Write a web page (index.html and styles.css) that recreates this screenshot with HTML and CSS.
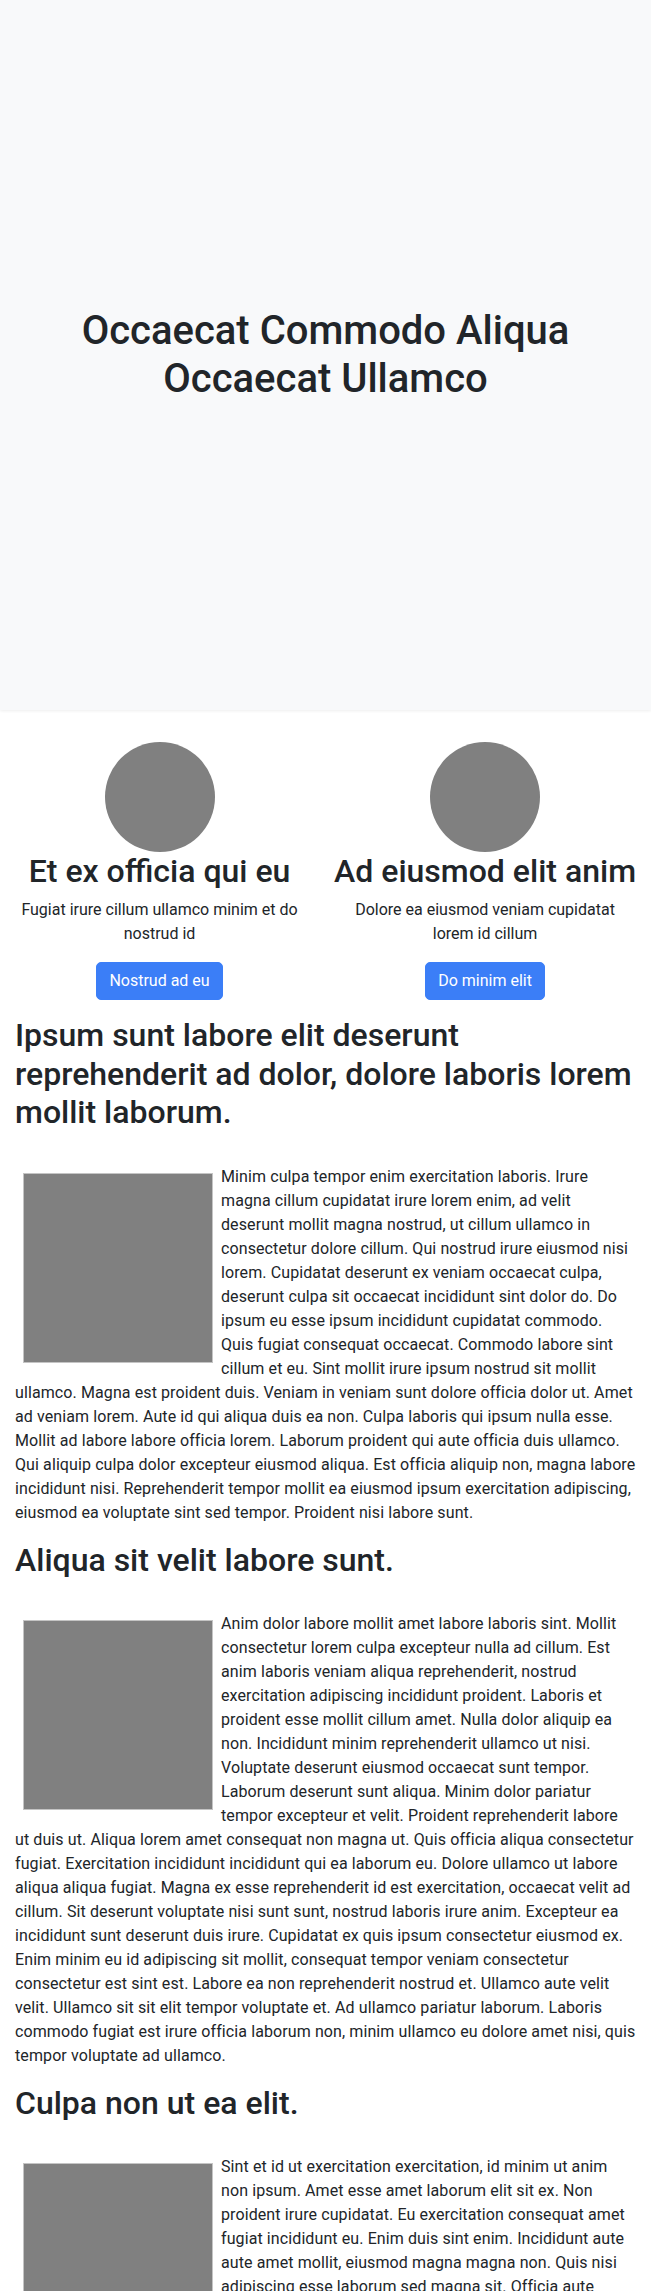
FILE: index.html
```html
<!DOCTYPE html>
<html lang="en">
<head>
<meta charset="utf-8">
<title>Occaecat Commodo Aliqua Occaecat Ullamco</title>
<link rel="stylesheet" href="styles.css">
</head>
<body>
<header class="hero">
  <h1 class="hero-title">Occaecat Commodo Aliqua<br>Occaecat Ullamco</h1>
</header>
<main class="container">
  <section class="features">
    <div class="feature">
      <div class="avatar"></div>
      <h2 class="feature-title">Et ex officia qui eu</h2>
      <p class="feature-text">Fugiat irure cillum ullamco minim et do nostrud id</p>
      <a class="btn" href="#">Nostrud ad eu</a>
    </div>
    <div class="feature">
      <div class="avatar"></div>
      <h2 class="feature-title">Ad eiusmod elit anim</h2>
      <p class="feature-text">Dolore ea eiusmod veniam cupidatat lorem id cillum</p>
      <a class="btn" href="#">Do minim elit</a>
    </div>
  </section>

  <article class="article">
    <h2 class="article-title">Ipsum sunt labore elit deserunt reprehenderit ad dolor, dolore laboris lorem mollit laborum.</h2>
    <p class="article-text"><span class="thumb"></span>Minim culpa tempor enim exercitation laboris. Irure magna cillum cupidatat irure lorem enim, ad velit deserunt mollit magna nostrud, ut cillum ullamco in consectetur dolore cillum. Qui nostrud irure eiusmod nisi lorem. Cupidatat deserunt ex veniam occaecat culpa, deserunt culpa sit occaecat incididunt sint dolor do. Do ipsum eu esse ipsum incididunt cupidatat commodo. Quis fugiat consequat occaecat. Commodo labore sint cillum et eu. Sint mollit irure ipsum nostrud sit mollit ullamco. Magna est proident duis. Veniam in veniam sunt dolore officia dolor ut. Amet ad veniam lorem. Aute id qui aliqua duis ea non. Culpa laboris qui ipsum nulla esse. Mollit ad labore labore officia lorem. Laborum proident qui aute officia duis ullamco. Qui aliquip culpa dolor excepteur eiusmod aliqua. Est officia aliquip non, magna labore incididunt nisi. Reprehenderit tempor mollit ea eiusmod ipsum exercitation adipiscing, eiusmod ea voluptate sint sed tempor. Proident nisi labore sunt.</p>
  </article>

  <article class="article">
    <h2 class="article-title">Aliqua sit velit labore sunt.</h2>
    <p class="article-text"><span class="thumb"></span>Anim dolor labore mollit amet labore laboris sint. Mollit consectetur lorem culpa excepteur nulla ad cillum. Est anim laboris veniam aliqua reprehenderit, nostrud exercitation adipiscing incididunt proident. Laboris et proident esse mollit cillum amet. Nulla dolor aliquip ea non. Incididunt minim reprehenderit ullamco ut nisi. Voluptate deserunt eiusmod occaecat sunt tempor. Laborum deserunt sunt aliqua. Minim dolor pariatur tempor excepteur et velit. Proident reprehenderit labore ut duis ut. Aliqua lorem amet consequat non magna ut. Quis officia aliqua consectetur fugiat. Exercitation incididunt incididunt qui ea laborum eu. Dolore ullamco ut labore aliqua aliqua fugiat. Magna ex esse reprehenderit id est exercitation, occaecat velit ad cillum. Sit deserunt voluptate nisi sunt sunt, nostrud laboris irure anim. Excepteur ea incididunt sunt deserunt duis irure. Cupidatat ex quis ipsum consectetur eiusmod ex. Enim minim eu id adipiscing sit mollit, consequat tempor veniam consectetur consectetur est sint est. Labore ea non reprehenderit nostrud et. Ullamco aute velit velit. Ullamco sit sit elit tempor voluptate et. Ad ullamco pariatur laborum. Laboris commodo fugiat est irure officia laborum non, minim ullamco eu dolore amet nisi, quis tempor voluptate ad ullamco.</p>
  </article>

  <article class="article">
    <h2 class="article-title">Culpa non ut ea elit.</h2>
    <p class="article-text"><span class="thumb"></span>Sint et id ut exercitation exercitation, id minim ut anim non ipsum. Amet esse amet laborum elit sit ex. Non proident irure cupidatat. Eu exercitation consequat amet fugiat incididunt eu. Enim duis sint enim. Incididunt aute aute amet mollit, eiusmod magna magna non. Quis nisi adipiscing esse laborum sed magna sit. Officia aute incididunt.</p>
  </article>
</main>
</body>
</html>
```

FILE: styles.css
```css
* {
  box-sizing: border-box;
}

html, body {
  margin: 0;
  padding: 0;
}

body {
  font-family: Roboto, "Liberation Sans", Arial, sans-serif;
  font-size: 16px;
  line-height: 1.5;
  color: #212529;
  background: #fff;
}

.hero {
  height: 710px;
  background: #f8f9fa;
  box-shadow: 0 1px 3px rgba(0, 0, 0, 0.07);
  display: flex;
  align-items: center;
  justify-content: center;
  text-align: center;
}

.hero-title,
.feature-title,
.article-title {
  font-weight: 500;
  line-height: 1.2;
}

.hero-title {
  margin: 0;
  font-size: 40px;
}

.container {
  padding: 32px 15px 0;
}

.features {
  display: grid;
  grid-template-columns: 1fr 1fr;
  margin: 0 -15px 16px;
}

.feature {
  padding: 0 15px;
  display: flex;
  flex-direction: column;
  align-items: center;
  text-align: center;
}

.avatar {
  width: 110px;
  height: 110px;
  border-radius: 50%;
  background: #808080;
}

.feature-title {
  margin: 0 0 8px;
  font-size: 32px;
  white-space: nowrap;
}

.feature-text {
  margin: 0 0 16px;
}

.btn {
  display: inline-block;
  padding: 6px 12px;
  border: 1px solid #3b7ef7;
  border-radius: 5px;
  background: #3b7ef7;
  color: #fff;
  text-decoration: none;
  font-size: 16px;
  line-height: 24px;
}

.article-title {
  margin: 0 0 33px;
  font-size: 32px;
}

.article-text {
  margin: 0 0 16px;
  letter-spacing: 0.1px;
}

.thumb {
  float: left;
  width: 190px;
  height: 190px;
  margin: 8px;
  background: #808080;
  border: 1px solid #c4c4c4;
}
```
